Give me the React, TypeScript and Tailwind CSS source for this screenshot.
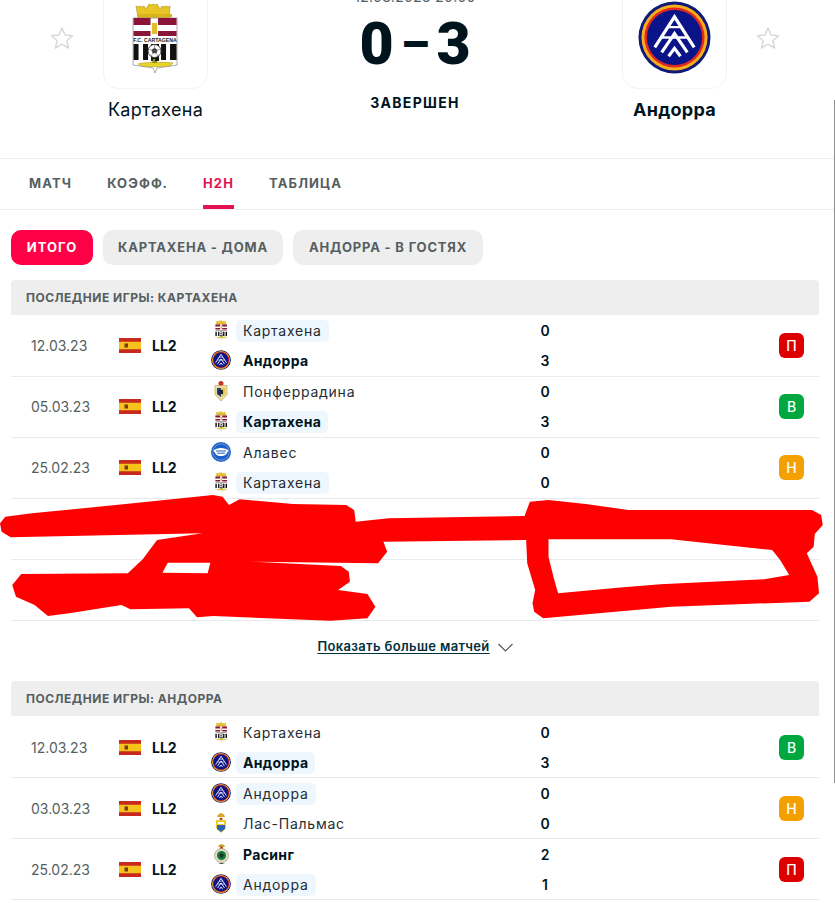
import { ReactNode } from 'react';

type Crest = 'cartagena' | 'andorra' | 'ponferradina' | 'alaves' | 'laspalmas' | 'racing';

interface TeamLine {
  crest: Crest;
  name: string;
  score: number;
  bold?: boolean;
  mark?: boolean;
}

interface Game {
  date: string;
  teams: [TeamLine, TeamLine];
  result: 'П' | 'В' | 'Н';
}

const cartagena = (score: number, bold = false, mark = true): TeamLine => ({ crest: 'cartagena', name: 'Картахена', score, bold, mark });
const andorra = (score: number, bold = false, mark = true): TeamLine => ({ crest: 'andorra', name: 'Андорра', score, bold, mark });

const firstGames: Game[] = [
  { date: '12.03.23', teams: [cartagena(0), andorra(3, true, false)], result: 'П' },
  { date: '05.03.23', teams: [{ crest: 'ponferradina', name: 'Понферрадина', score: 0 }, cartagena(3, true)], result: 'В' },
  { date: '25.02.23', teams: [{ crest: 'alaves', name: 'Алавес', score: 0 }, cartagena(0)], result: 'Н' },
];

const secondGames: Game[] = [
  { date: '12.03.23', teams: [cartagena(0, false, false), andorra(3, true)], result: 'В' },
  { date: '03.03.23', teams: [andorra(0), { crest: 'laspalmas', name: 'Лас-Пальмас', score: 0 }], result: 'Н' },
  { date: '25.02.23', teams: [{ crest: 'racing', name: 'Расинг', score: 2, bold: true }, andorra(1)], result: 'П' },
];

const resultColors = {
  П: 'bg-[#dc0000]',
  В: 'bg-[#00a83f]',
  Н: 'bg-[#f3a000]',
};

function StarIcon() {
  return (
    <svg width="24" height="24" viewBox="0 0 24 24" fill="none" stroke="#d6d9da" strokeWidth="1.5" strokeLinejoin="round">
      <path d="M12 2l3 7 7.5.7-5.7 5 1.7 7.3L12 18.2 5.500 22l1.700-7.300-5.700-5L9 9z" />
    </svg>
  );
}

function CartagenaCrest({ size, label }: { size: number; label?: boolean }) {
  return (
    <svg width={size * 0.64} height={size} viewBox="0 0 46 72">
      {/* crown */}
      <path d="M4 4l2 1 2-1 2 1 2-1 2 3 3-5 2 1 2-1 2 1 2-1 3 5 2-3 2 1 2-1 2 1 2-1-1 12H6z" fill="#e8c628" stroke="#a98f16" strokeWidth="0.6" />
      <path d="M6 12h34v3H6z" fill="#d9b41c" />
      {/* shield */}
      <path d="M1 16h44v47l-20 3-2 5-2-5-20-3z" fill="#fff" stroke="#8a8a8a" strokeWidth="0.7" />
      <path d="M1.500 16h17v7h-17zM26 16h18.500v7H26zM1.500 29h17v5h-17zM26 29h18.500v5H26z" fill="#8b1538" />
      <path d="M20 21h5v11h-5z" fill="#e3bd26" />
      {label ? (
        <text x="23" y="40" textAnchor="middle" fontSize="5.200" fontWeight="700" fontFamily="Liberation Sans, sans-serif" fill="#222">F.C. CARTAGENA</text>
      ) : (
        <path d="M4 37h38v2H4z" fill="#666" />
      )}
      <path d="M1.500 42h5v16h-5zM11 42h5v16h-5zM29 42h5v16h-5zM38 42h6.500v16H38z" fill="#111" />
      <path d="M19 42h8v17h-8z" fill="#111" />
      <circle cx="22.500" cy="49" r="6.500" fill="#fff" stroke="#333" strokeWidth="0.9" />
      <path d="M22.500 46l2.800 2-1 3h-3.600l-1-3zM22.500 42.500v3.500M25.500 48l3-1M24 51l2 3M21 51l-2 3M19.500 48l-3-1" fill="#444" stroke="#444" strokeWidth="0.5" />
      {/* submarine */}
      <path d="M6 62c4-2 30-2 35-1l-3 3c-10 1-22 1-28 0z" fill="#e6d528" stroke="#a98f16" strokeWidth="0.5" />
      <path d="M21 57h2v2h2v2h-5z" fill="#8e8a20" />
    </svg>
  );
}

function AndorraCrest({ size }: { size: number }) {
  return (
    <svg width={size} height={size} viewBox="0 0 74 74">
      <circle cx="37" cy="37" r="36.500" fill="#0f1a78" />
      <circle cx="37" cy="37" r="33.500" fill="#f6ad1e" />
      <circle cx="37" cy="37" r="30.500" fill="#e02a1f" />
      <circle cx="37" cy="37" r="28" fill="#0a1488" />
      <g fill="none" stroke="#fff" strokeWidth="3.200">
        <path d="M17 47l20-31 20 31" />
        <path d="M24 52l13-19 13 19" />
        <path d="M31 56l6-8 6 8" />
        <path d="M30 26.500h14M24 37h26" strokeWidth="2.400" />
      </g>
    </svg>
  );
}

function SmallCrest({ crest }: { crest: Crest }) {
  if (crest === 'cartagena') return <CartagenaCrest size={20} />;
  if (crest === 'andorra') return <AndorraCrest size={20} />;
  if (crest === 'alaves') {
    return (
      <svg width="20" height="20" viewBox="0 0 20 20">
        <circle cx="10" cy="10" r="10" fill="#1d5fc4" />
        <circle cx="10" cy="10" r="8.200" fill="none" stroke="#9cc0ee" strokeWidth="0.6" />
        <path d="M2.500 8.500c3-3.500 12-3.500 15 0l-2.500 4c-3 2-7 2-10 0z" fill="#fff" />
        <path d="M5 9h10M6 11.200h8" stroke="#1d5fc4" strokeWidth="1" />
      </svg>
    );
  }
  if (crest === 'ponferradina') {
    return (
      <svg width="14" height="20" viewBox="0 0 14 20">
        <circle cx="7" cy="2.500" r="2.500" fill="#c8312a" />
        <path d="M1 4.500h12v9L7 20 1 13.500z" fill="#ecdca8" stroke="#b89a40" strokeWidth="0.6" />
        <path d="M3 7h4v9l-4-3z" fill="#24406e" />
        <path d="M7 7h4v6l-4 3z" fill="#e6c24a" />
        <path d="M5 9h4v4H5z" fill="#22262b" />
      </svg>
    );
  }
  if (crest === 'laspalmas') {
    return (
      <svg width="14" height="20" viewBox="0 0 14 20">
        <path d="M3 4l1-2.500 3-1.500 3 1.500 1 2.500z" fill="#d9a62a" />
        <circle cx="7" cy="6" r="1.500" fill="#c43c2e" />
        <path d="M2 7h10v8l-5 5-5-5z" fill="#f0cd2a" />
        <path d="M3 12h8v4l-4 3-4-3z" fill="#2a62b8" />
        <path d="M4 9h6v2H4z" fill="#fff" />
      </svg>
    );
  }
  return (
    <svg width="15" height="20" viewBox="0 0 15 20">
      <path d="M4 3l1-2 2.500-1L10 1l1 2z" fill="#c9a032" />
      <circle cx="7.500" cy="4" r="1.500" fill="#b0342a" />
      <circle cx="7.500" cy="11.500" r="7" fill="#e6dcc0" stroke="#8f8a70" strokeWidth="0.6" />
      <circle cx="7.500" cy="11.500" r="4.500" fill="#0f7a3c" />
      <circle cx="7.500" cy="11.500" r="2" fill="#17352a" />
      <path d="M4 19h7l-3.500 1z" fill="#333" />
    </svg>
  );
}

function SpainFlag() {
  return (
    <svg width="22" height="15" viewBox="0 0 22 15" className="shrink-0">
      <path d="M0 0h22v15H0z" fill="#c8281e" />
      <path d="M0 3.750h22v7.500H0z" fill="#f6c21c" />
      <path d="M5.500 5.500h3.500v4h-3.500z" fill="#7a3a12" />
    </svg>
  );
}

function TeamRow({ team }: { team: TeamLine }) {
  return (
    <div className="flex items-center h-[30px]">
      <div className="w-[20px] flex justify-center shrink-0">
        <SmallCrest crest={team.crest} />
      </div>
      <div className="ml-[5px] w-[304px]">
        <span className={`inline-block px-[7px] h-[22px] leading-[22px] rounded-[5px] text-[14px] ${team.mark ? 'bg-[#eef6fe]' : ''} ${team.bold ? 'font-bold text-[#00141e] tracking-[0.35px]' : 'text-[#1f2d33] tracking-[0.75px]'}`}>
          {team.name}
        </span>
      </div>
      <span className="w-[10px] text-center text-[14px] font-semibold text-[#00141e]">{team.score}</span>
    </div>
  );
}

function GameRow({ game, lower }: { game: Game; lower?: boolean }) {
  return (
    <div className={`flex items-center h-[61px] border-b border-[#e8eaeb] ${lower ? '' : 'pb-[2px]'}`}>
      <span className="ml-[20px] w-[88px] text-[14px] text-[#555e61]">{game.date}</span>
      <SpainFlag />
      <span className="ml-[11px] w-[59px] text-[14px] font-bold text-[#00141e]">LL2</span>
      <div className="flex flex-col">
        {game.teams.map((team) => (
          <TeamRow key={team.name} team={team} />
        ))}
      </div>
      <span className={`ml-auto mr-[15px] w-[25px] h-[25px] rounded-[6px] flex items-center justify-center text-white text-[14px] font-medium ${resultColors[game.result]}`}>
        {game.result}
      </span>
    </div>
  );
}

function SectionHeader({ children }: { children: ReactNode }) {
  return (
    <div className="h-[35px] bg-[#eeeeee] rounded-t-[4px] pl-[15px] flex items-center text-[12px] font-bold tracking-[0.5px] text-[#555e61]">
      {children}
    </div>
  );
}

function FilterPill({ label, width, active }: { label: string; width: string; active?: boolean }) {
  return (
    <span className={`h-[35px] rounded-[10px] flex items-center justify-center text-[13px] font-bold ${width} ${active ? 'bg-[#ff0046] text-white tracking-[1px]' : 'bg-[#eeeeee] text-[#555e61] tracking-[0.8px]'}`}>
      {label}
    </span>
  );
}

function TeamHead({ name, bold, children }: { name: string; bold?: boolean; children: ReactNode }) {
  return (
    <div className="flex flex-col items-center w-[105px]">
      <div className="w-[105px] h-[105px] -mt-[16px] rounded-[16px] border border-[#f2f3f3] flex items-end justify-center pb-[14px]">
        {children}
      </div>
      <span className={`mt-[7px] text-[18px] tracking-[0.3px] text-[#00141e] whitespace-nowrap ${bold ? 'font-bold' : ''}`}>{name}</span>
    </div>
  );
}

export default function App() {
  const tabs = ['МАТЧ', 'КОЭФФ.', 'H2H', 'ТАБЛИЦА'];

  return (
    <div className="relative w-[835px] h-[903px] overflow-hidden bg-white font-['Inter',sans-serif]">
      {/* Match header, the top of it is scrolled out of view */}
      <header className="h-[159px] overflow-hidden border-b border-[#eceded] flex pl-[50px] pr-[55px]">
        <div className="pt-[26px] w-[53px]"><StarIcon /></div>
        <TeamHead name="Картахена">
          <CartagenaCrest size={72} label />
        </TeamHead>
        <div className="flex-1 flex flex-col items-center">
          <span className="-mt-[14px] h-[16px] text-[14px] tracking-[0.3px] text-[#555e61]">12.03.2023 20:00</span>
          <div className="mt-[6px] h-[72px] flex items-center text-[59px] font-black text-[#00141e] font-['Roboto',sans-serif]">
            <span className="w-[38px] text-center">0</span>
            <span className="w-[39px] text-center text-[46px]">–</span>
            <span className="w-[38px] text-center">3</span>
          </div>
          <span className="mt-[12px] text-[14px] font-bold tracking-[1.3px] text-[#00141e]">ЗАВЕРШЕН</span>
        </div>
        <TeamHead name="Андорра" bold>
          <AndorraCrest size={73} />
        </TeamHead>
        <div className="pt-[26px] pl-[29px]"><StarIcon /></div>
      </header>

      <nav className="h-[51px] border-b border-[#eceded] flex gap-[35px] pl-[29px]">
        {tabs.map((tab) => (
          <span key={tab} className={`h-full flex items-center text-[13px] font-bold tracking-[1.15px] ${tab === 'H2H' ? 'text-[#e4134f] border-b-4 border-[#e4134f] pt-[4px]' : 'text-[#555e61]'}`}>
            {tab}
          </span>
        ))}
      </nav>

      <main className="pl-[11px]">
        <div className="w-[808px] pt-[20px]">
          <div className="flex gap-[10px]">
            <FilterPill label="ИТОГО" width="w-[82px]" active />
            <FilterPill label="КАРТАХЕНА - ДОМА" width="w-[180px]" />
            <FilterPill label="АНДОРРА - В ГОСТЯХ" width="w-[190px]" />
          </div>

          <div className="mt-[15px]">
            <SectionHeader>ПОСЛЕДНИЕ ИГРЫ: КАРТАХЕНА</SectionHeader>
            <div className="pt-px">
              {firstGames.map((game) => (
                <GameRow key={game.date} game={game} />
              ))}
              <div className="h-[61px] border-b border-[#e8eaeb]" />
              <div className="h-[61px] border-b border-[#e8eaeb]" />
            </div>
          </div>

          <div className="h-[50px] pt-[2px] flex items-center justify-center gap-[8px] text-[#00303c]">
            <span className="text-[13px] font-semibold underline underline-offset-2 tracking-[0.35px]">Показать больше матчей</span>
            <svg width="15" height="9" viewBox="0 0 15 9" fill="none" stroke="#4d5a5f" strokeWidth="1.200"><path d="M.5 1l7 7 7-7" /></svg>
          </div>

          <div className="mt-[10px]">
            <SectionHeader>ПОСЛЕДНИЕ ИГРЫ: АНДОРРА</SectionHeader>
            <div className="pt-px">
              {secondGames.map((game) => (
                <GameRow key={game.date} game={game} lower />
              ))}
            </div>
          </div>
        </div>
      </main>

      {/* Scroll bar edge */}
      <div className="absolute right-0 top-[100px] h-[683px] w-px bg-[#8f8f8f]" />

      {/* Red scribble drawn over the screenshot */}
      <svg className="absolute left-0 top-[490px] w-[835px] h-[140px] pointer-events-none" viewBox="0 0 1568 420" preserveAspectRatio="none" fill="#ff0000" fillRule="evenodd">
        <path d="M10 80L60 70L250 40L400 15L418 20L430 45L450 28L550 42L650 45L665 60L668 95L730 85L985 78L995 35L1030 30L1100 42L1180 60L1525 60L1542 75L1545 105L1530 132L1528 170L1515 190L1535 260L1538 310L1520 335L1260 350L1020 385L1003 365L1000 340L1005 300L990 220L988 150L720 155L727 185L710 220L470 215L640 228L655 245L657 275L635 300L690 312L705 350L690 385L620 392L400 378L370 382L355 355L245 358L228 345L130 370L90 378L65 345L30 320L23 285L40 252L240 250L268 208L295 150L380 130L20 142L3 125L0 100Z
          M1030 148L1260 148L1450 180L1465 210L1482 255L1435 268L1240 283L1160 293L1048 310L1040 265L1030 200Z
          M315 218L395 218L390 250L305 248Z" />
      </svg>
    </div>
  );
}
